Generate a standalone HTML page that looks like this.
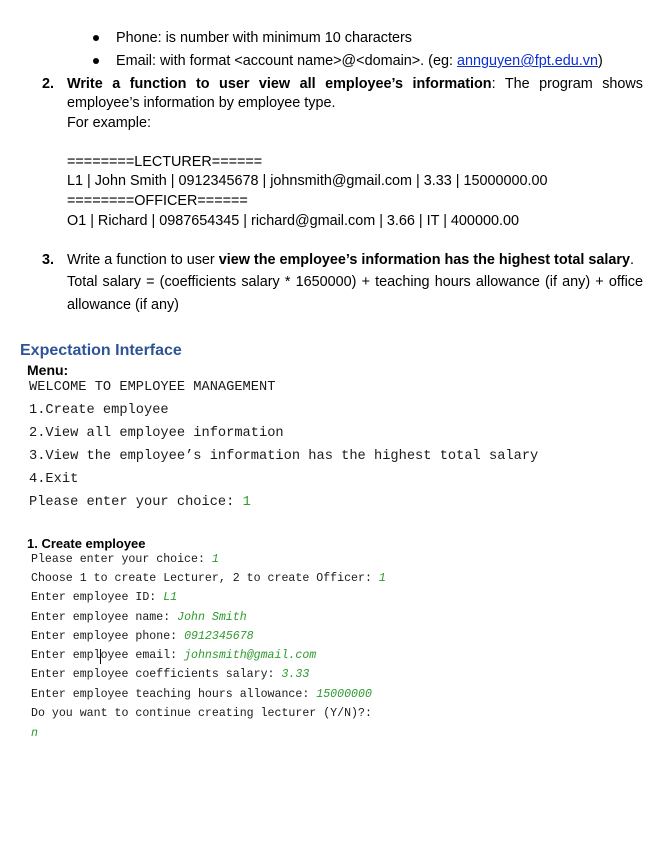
<!DOCTYPE html>
<html><head><meta charset="utf-8"><style>
body{margin:0;width:661px;height:852px;background:#fff;position:relative;overflow:hidden;font-family:"Liberation Sans",sans-serif;color:#000}
.l{position:absolute;white-space:nowrap;font-size:14.4px;line-height:16px}
.m{position:absolute;white-space:nowrap;font-family:"Liberation Mono",monospace;font-size:13.7px;line-height:16px;color:#1a1a1a}
.s{position:absolute;white-space:nowrap;font-family:"Liberation Mono",monospace;font-size:11.6px;line-height:14px;color:#1a1a1a}
.g{color:#2e9a2e;font-style:italic}
.b{font-weight:bold}
.dot{position:absolute;width:6px;height:6px;border-radius:50%;background:#000}
a{color:#0b2fd6;text-decoration:underline}
.j{text-align:justify;text-align-last:justify;white-space:normal}
</style></head><body>
<div class="dot" style="left:93px;top:35px"></div>
<div class="l" style="left:116px;top:30px">Phone: is number with minimum 10 characters</div>
<div class="dot" style="left:93px;top:58px"></div>
<div class="l" style="left:116px;top:53px">Email: with format &lt;account name&gt;@&lt;domain&gt;. (eg: <a>annguyen@fpt.edu.vn</a>)</div>
<div class="l b" style="left:42px;top:76px">2.</div>
<div class="l j" style="left:67px;top:76px;width:576px"><b>Write a function to user view all employee’s information</b>: The program shows</div>
<div class="l" style="left:67px;top:95px">employee’s information by employee type.</div>
<div class="l" style="left:67px;top:115px">For example:</div>
<div class="l" style="left:67px;top:154px">========LECTURER======</div>
<div class="l" style="left:67px;top:173px">L1 | John Smith | 0912345678 | johnsmith@gmail.com | 3.33 | 15000000.00</div>
<div class="l" style="left:67px;top:193px">========OFFICER======</div>
<div class="l" style="left:67px;top:213px">O1 | Richard | 0987654345 | richard@gmail.com | 3.66 | IT | 400000.00</div>
<div class="l b" style="left:42px;top:252px">3.</div>
<div class="l" style="left:67px;top:252px">Write a function to user <b>view the employee’s information has the highest total salary</b>.</div>
<div class="l j" style="left:67px;top:274px;width:576px">Total salary = (coefficients salary * 1650000) + teaching hours allowance (if any) + office</div>
<div class="l" style="left:67px;top:297px">allowance (if any)</div>
<div class="l b" style="left:20px;top:341px;font-size:16px;line-height:20px;color:#2f5496">Expectation Interface</div>
<div class="l b" style="left:27px;top:362px;font-size:14px">Menu:</div>
<div class="m" style="left:29px;top:380px">WELCOME TO EMPLOYEE MANAGEMENT</div>
<div class="m" style="left:29px;top:403px">1.Create employee</div>
<div class="m" style="left:29px;top:426px">2.View all employee information</div>
<div class="m" style="left:29px;top:449px">3.View the employee’s information has the highest total salary</div>
<div class="m" style="left:29px;top:472px">4.Exit</div>
<div class="m" style="left:29px;top:495px">Please enter your choice: <span style="color:#2e9a2e">1</span></div>
<div class="l b" style="left:27px;top:536px;font-size:13px">1. Create employee</div>
<div class="s" style="left:31px;top:553px">Please enter your choice: <span class="g">1</span></div>
<div class="s" style="left:31px;top:572px">Choose 1 to create Lecturer, 2 to create Officer: <span class="g">1</span></div>
<div class="s" style="left:31px;top:591px">Enter employee ID: <span class="g">L1</span></div>
<div class="s" style="left:31px;top:611px">Enter employee name: <span class="g">John Smith</span></div>
<div class="s" style="left:31px;top:630px">Enter employee phone: <span class="g">0912345678</span></div>
<div class="s" style="left:31px;top:649px">Enter employee email: <span class="g">johnsmith@gmail.com</span></div>
<div style="position:absolute;left:100px;top:649px;width:1px;height:15px;background:#000"></div>
<div class="s" style="left:31px;top:668px">Enter employee coefficients salary: <span class="g">3.33</span></div>
<div class="s" style="left:31px;top:688px">Enter employee teaching hours allowance: <span class="g">15000000</span></div>
<div class="s" style="left:31px;top:707px">Do you want to continue creating lecturer (Y/N)?:</div>
<div class="s" style="left:31px;top:727px"><span class="g">n</span></div>
</body></html>
